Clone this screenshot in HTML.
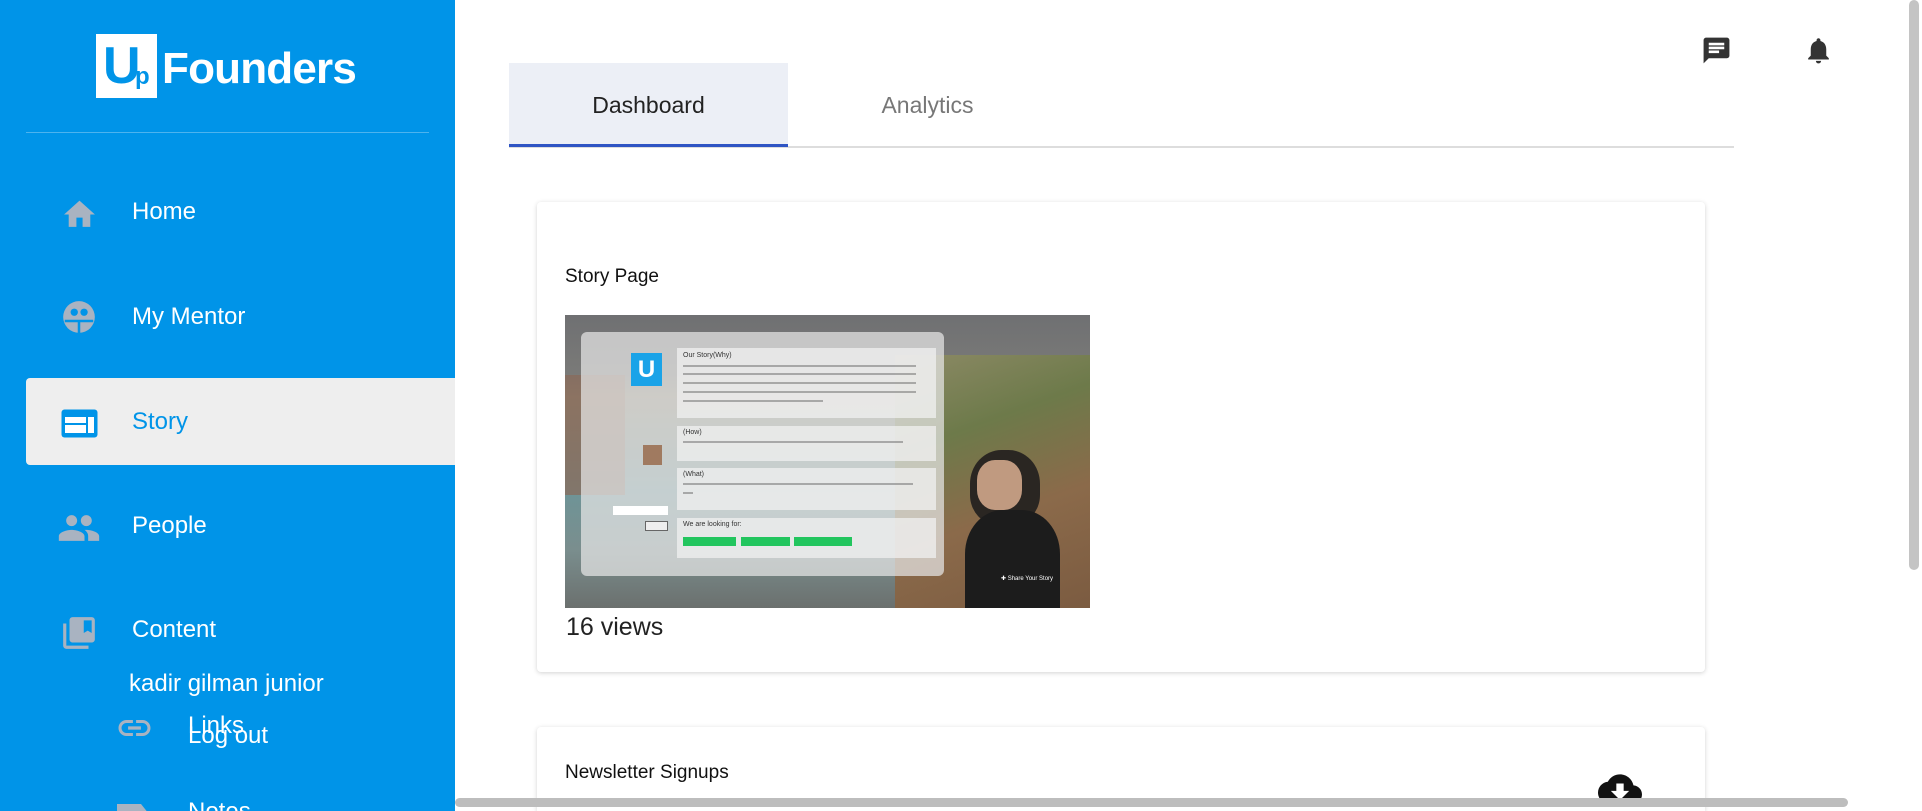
<!DOCTYPE html>
<html style="overflow:hidden;height:811px"><head><meta charset="utf-8"><style>
*{box-sizing:border-box;margin:0;padding:0}
html,body{overflow:hidden}
body{width:1922px;height:811px;background:#fff;font-family:"Liberation Sans",sans-serif;position:relative}
.a{position:absolute}
.nav{position:absolute;left:132px;color:#fff;font-size:24px;line-height:28px;transform:translateY(-50%)}
.card{position:absolute;background:#fff;box-shadow:0 1px 5px rgba(0,0,0,.18);border-radius:4px}
.bx{position:absolute;background:rgba(240,240,240,.75);}
.t{position:absolute;color:#333;font-size:7px;white-space:nowrap}
.ln{position:absolute;height:2px;background:rgba(90,90,90,.45)}
</style></head><body>
<div class="a" style="left:0;top:0;width:455px;height:811px;background:#0094e8;overflow:hidden">
 <div class="a" style="left:96px;top:34px;width:61px;height:64px;background:#fff"></div>
 <div class="a" style="left:103px;top:38px;color:#0094e8;font-weight:bold;font-size:52px;line-height:56px">U</div>
 <div class="a" style="left:135px;top:64px;color:#0094e8;font-weight:bold;font-size:24px;line-height:26px">p</div>
 <div class="a" style="left:162px;top:44px;color:#fff;font-weight:bold;font-size:44px;line-height:50px;letter-spacing:-0.8px">Founders</div>
 <div class="a" style="left:26px;top:132px;width:403px;height:1px;background:#4db3ee"></div>

 <svg class="a" style="left:61px;top:196px" width="37" height="37" viewBox="0 0 24 24"><path fill="#a9b3c1" d="M10 20v-6h4v6h5v-8h3L12 3 2 12h3v8z"/></svg>
 <div class="nav" style="top:212px">Home</div>

 <svg class="a" style="left:60px;top:298px" width="38" height="38" viewBox="0 0 24 24"><circle cx="12" cy="12" r="10" fill="#a9b3c1"/><circle cx="9" cy="9" r="2.3" fill="#0094e8"/><circle cx="15.2" cy="9" r="2.3" fill="#0094e8"/><path d="M3 14.5h18M12 14.5v8" stroke="#0094e8" stroke-width="1.6" fill="none"/></svg>
 <div class="nav" style="top:317px">My Mentor</div>

 <div class="a" style="left:26px;top:378px;width:429px;height:87px;background:#eee;border-radius:4px 0 0 4px"></div>
 <svg class="a" style="left:61px;top:409px" width="37" height="29" viewBox="0 0 37 29"><rect x="0.5" y="0.5" width="36" height="28" rx="3" fill="#0094e8"/><rect x="4" y="8" width="21" height="6" fill="#fff"/><rect x="4" y="16" width="21" height="8" fill="#fff"/><rect x="27" y="8" width="6" height="16" fill="#fff"/></svg>
 <div class="nav" style="top:422px;color:#0094e8">Story</div>

 <svg class="a" style="left:57px;top:506px" width="44" height="44" viewBox="0 0 24 24"><path fill="#a9b3c1" d="M16 11c1.66 0 2.99-1.34 2.99-3S17.66 5 16 5c-1.66 0-3 1.34-3 3s1.340 3 3 3zm-8 0c1.66 0 2.99-1.34 2.99-3S9.66 5 8 5C6.34 5 5 6.34 5 8s1.34 3 3 3zm0 2c-2.33 0-7 1.17-7 3.5V19h14v-2.5c0-2.33-4.67-3.5-7-3.5zm8 0c-.29 0-.62.02-.97.05 1.16.84 1.970 1.97 1.97 3.45V19h6v-2.5c0-2.33-4.67-3.5-7-3.5z"/></svg>
 <div class="nav" style="top:526px">People</div>

 <svg class="a" style="left:60px;top:614px" width="38" height="38" viewBox="0 0 24 24"><path fill="#a9b3c1" d="M4 6H2v14c0 1.1.9 2 2 2h14v-2H4V6zm16-4H8c-1.1 0-2 .9-2 2v12c0 1.1.9 2 2 2h12c1.1 0 2-.9 2-2V4c0-1.1-.9-2-2-2zm0 10l-2.5-1.5L15 12V4h5v8z"/></svg>
 <div class="nav" style="top:630px">Content</div>

 <div class="a" style="left:129px;top:670px;color:#fff;font-size:24px;line-height:28px">kadir gilman junior</div>
 <svg class="a" style="left:115px;top:712px" width="39" height="32" viewBox="0 0 24 20"><path fill="#a9b3c1" d="M3.9 10c0-1.71 1.39-3.1 3.1-3.1h4V5H7c-2.76 0-5 2.24-5 5s2.24 5 5 5h4v-1.9H7c-1.71 0-3.1-1.39-3.1-3.1zM8 11h8V9H8v2zm9-6h-4v1.9h4c1.71 0 3.1 1.39 3.1 3.1s-1.39 3.1-3.1 3.1h-4V15h4c2.76 0 5-2.24 5-5s-2.24-5-5-5z"/></svg>
 <div class="a" style="left:188px;top:712px;color:#fff;font-size:24px;line-height:28px">Links</div>
 <div class="a" style="left:188px;top:722px;color:#fff;font-size:24px;line-height:28px">Log out</div>
 <svg class="a" style="left:117px;top:802px" width="34" height="20" viewBox="0 0 34 20"><path fill="#a9b3c1" d="M0 2h24l8 10v8H0z"/></svg>
 <div class="a" style="left:188px;top:798px;color:#fff;font-size:24px;line-height:28px">Notes</div>
</div>

<svg class="a" style="left:1701px;top:35px" width="31" height="31" viewBox="0 0 24 24"><path fill="#333" d="M20 2H4c-1.1 0-2 .9-2 2v18l4-4h14c1.1 0 2-.9 2-2V4c0-1.1-.9-2-2-2zM6 9h12v2H6V9zm8 5H6v-2h8v2zm4-6H6V6h12v2z"/></svg>
<svg class="a" style="left:1803px;top:35px" width="31" height="31" viewBox="0 0 24 24"><path fill="#333" d="M12 22c1.1 0 2-.9 2-2h-4c0 1.1.89 2 2 2zm6-6v-5c0-3.07-1.64-5.64-4.5-6.32V4c0-.83-.67-1.5-1.5-1.5s-1.5.67-1.5 1.5v.68C7.63 5.36 6 7.92 6 11v5l-2 2v1h16v-1l-2-2z"/></svg>

<div class="a" style="left:509px;top:63px;width:279px;height:84px;background:#eceff6"></div>
<div class="a" style="left:509px;top:146px;width:1225px;height:2px;background:#ddd"></div>
<div class="a" style="left:509px;top:144px;width:279px;height:3px;background:#2f55c4"></div>
<div class="a" style="left:509px;top:92px;width:279px;text-align:center;font-size:23px;color:#222">Dashboard</div>
<div class="a" style="left:788px;top:92px;width:279px;text-align:center;font-size:23px;color:#777">Analytics</div>

<div class="card" style="left:537px;top:202px;width:1168px;height:470px"></div>
<div class="a" style="left:565px;top:266px;font-size:19px;color:#111">Story Page</div>
<div class="a" style="left:565px;top:315px;width:525px;height:293px;overflow:hidden;background:linear-gradient(180deg,#6f7072 0%,#7a7a78 20%,#8f8a78 28%,#7d8c86 45%,#6e9497 60%,#7a8e8e 80%,#6b706e 100%)">
 <div class="a" style="left:330px;top:40px;width:200px;height:260px;background:linear-gradient(160deg,#8d8a66 0%,#6d7a4a 30%,#8b6a4a 60%,#7a5a40 100%)"></div>
 <div class="a" style="left:0;top:60px;width:60px;height:120px;background:#8a6a58;opacity:.7"></div>
 <div class="a" style="left:405px;top:135px;width:70px;height:75px;background:#2a2622;border-radius:45% 45% 40% 40%"></div>
 <div class="a" style="left:412px;top:145px;width:45px;height:50px;background:#c09a80;border-radius:40%"></div>
 <div class="a" style="left:400px;top:195px;width:95px;height:110px;background:#1c1c1c;border-radius:40% 40% 0 0"></div>
 <div class="bx" style="left:16px;top:17px;width:363px;height:244px;background:rgba(230,230,230,.72);border-radius:6px"></div>
 <div class="a" style="left:66px;top:38px;width:31px;height:33px;background:#1aa3e8;color:#fff;font-weight:bold;font-size:24px;line-height:33px;text-align:center">U</div>
 <div class="bx" style="left:112px;top:33px;width:259px;height:70px"></div>
 <div class="t" style="left:118px;top:37px">Our Story(Why)</div>
 <div class="ln" style="left:118px;top:50px;width:233px"></div><div class="ln" style="left:118px;top:58px;width:233px"></div><div class="ln" style="left:118px;top:67px;width:233px"></div><div class="ln" style="left:118px;top:76px;width:233px"></div><div class="ln" style="left:118px;top:85px;width:140px"></div>
 <div class="bx" style="left:112px;top:111px;width:259px;height:35px"></div>
 <div class="t" style="left:118px;top:114px">(How)</div><div class="ln" style="left:118px;top:126px;width:220px"></div>
 <div class="bx" style="left:112px;top:153px;width:259px;height:42px"></div>
 <div class="t" style="left:118px;top:156px">(What)</div><div class="ln" style="left:118px;top:168px;width:230px"></div><div class="ln" style="left:118px;top:177px;width:10px"></div>
 <div class="bx" style="left:112px;top:203px;width:259px;height:40px"></div>
 <div class="t" style="left:118px;top:206px">We are looking for:</div>
 <div class="a" style="left:118px;top:222px;width:53px;height:9px;background:#22c55e"></div>
 <div class="a" style="left:176px;top:222px;width:49px;height:9px;background:#22c55e"></div>
 <div class="a" style="left:229px;top:222px;width:58px;height:9px;background:#22c55e"></div>
 <div class="a" style="left:48px;top:191px;width:55px;height:9px;background:#fff"></div>
 <div class="a" style="left:80px;top:206px;width:23px;height:10px;background:#eee;border:1px solid #666"></div>
 <div class="a" style="left:78px;top:130px;width:19px;height:20px;background:#a07a60"></div>
 <div class="t" style="left:436px;top:260px;color:#fff;font-size:6px">✚ Share Your Story</div>
</div>
<div class="a" style="left:566px;top:613px;font-size:25px;color:#222">16 views</div>

<div class="card" style="left:537px;top:727px;width:1168px;height:84px;border-radius:4px 4px 0 0"></div>
<div class="a" style="left:565px;top:762px;font-size:19px;color:#111">Newsletter Signups</div>
<svg class="a" style="left:1598px;top:772px" width="44" height="34" viewBox="0 0 24 18"><path fill="#111" d="M19.35 7.04C18.67 3.59 15.64 1 12 1 9.11 1 6.6 2.64 5.35 5.04 2.34 5.36 0 7.91 0 11c0 3.31 2.69 6 6 6h13c2.76 0 5-2.24 5-5 0-2.640-2.05-4.78-4.65-4.960zM17 10l-5 5-5-5h3V6h4v4h3z"/></svg>

<div class="a" style="left:1909px;top:0;width:10px;height:570px;background:#c4c4c4;border-radius:5px"></div>
<div class="a" style="left:455px;top:798px;width:1393px;height:9px;background:#bdbdbd;border-radius:5px"></div>
</body></html>
